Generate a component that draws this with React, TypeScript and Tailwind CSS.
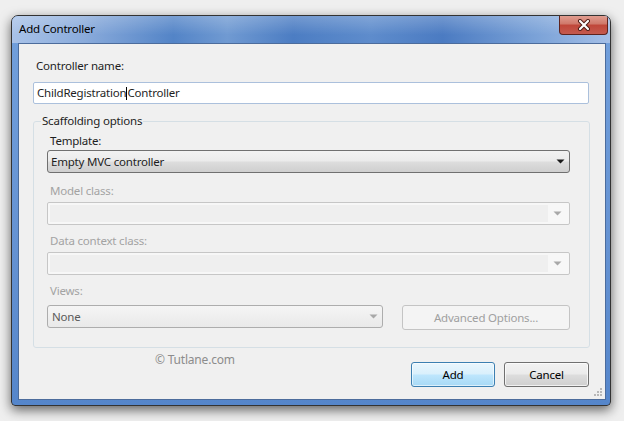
import React from "react";

function Arrow({ color }: { color: string }) {
  return (
    <svg width="9" height="5" viewBox="0 0 9 5">
      <path d="M0.5 0.5 L8.5 0.5 L4.5 4.5 Z" fill={color} />
    </svg>
  );
}

function DisabledCombo() {
  return (
    <div className="w-[523px] h-[23px] border border-[#c6c6c6] rounded-[2px] bg-[#f7f7f7] flex p-[2px]">
      <div className="flex-1 bg-[#efefef]" />
      <div className="w-[19px] flex items-center justify-center">
        <Arrow color="#a8a8a8" />
      </div>
    </div>
  );
}

export default function App() {
  return (
    <div className="w-[624px] h-[421px] bg-[#efefef] pt-[15px] pl-[11px] font-['Noto_Sans',sans-serif] text-[11.5px] tracking-[-0.2px] text-[#1e1e1e]">
      <div className="relative w-[600px] h-[391px] flex flex-col rounded-t-[7px] rounded-b-[4px] border border-[#333333] bg-[linear-gradient(180deg,#72a0dc_0%,#6592d2_60%,#5586cb_100%)] shadow-[0_4px_12px_rgba(0,0,0,0.6)] overflow-hidden">
        <div className="h-[27px] flex items-center pl-[7px] pb-[1px] leading-[16px] bg-[linear-gradient(180deg,rgba(255,255,255,0.22),rgba(255,255,255,0)_70%),linear-gradient(90deg,#a8c2e8_0%,#8aabdb_12%,#5384c7_27%,#709ad2_36%,#4c7dc3_47%,#5e8ccc_60%,#4b7bc2_72%,#7ca3d8_88%,#a4bfe7_100%)]">
          <span className="text-black">Add Controller</span>
        </div>
        <div className="absolute top-[-1px] right-[2px] w-[49px] h-[20px] rounded-b-[4px] border border-[#5e231d] border-t-0 bg-[linear-gradient(180deg,#e3a194_0%,#d07a6c_45%,#c0473a_55%,#c45a4e_100%)] flex items-center justify-center">
          <svg width="14" height="12" viewBox="0 0 14 12">
            <path d="M3 2 L11 10 M11 2 L3 10" stroke="#4a1a14" strokeWidth="4" strokeLinecap="round" />
            <path d="M3 2 L11 10 M11 2 L3 10" stroke="#ffffff" strokeWidth="2.2" strokeLinecap="round" />
          </svg>
        </div>

        <div className="relative flex-1 ml-[6px] mr-[4px] mb-[5px] border border-[#4c6c9c] bg-[#f0f0f0] flex flex-col items-start pl-[14px] pr-[16px]">
          <div className="mt-[14px] ml-[3px] h-[16px] leading-[16px]">Controller name:</div>
          <div className="mt-[8px] w-[556px] h-[22px] border border-[#abc0dc] rounded-[2px] bg-white flex items-center pl-[3px] leading-[16px]">
            <span>ChildRegistration</span>
            <span className="inline-block w-[1px] h-[13px] bg-black" />
            <span>Controller</span>
          </div>

          <fieldset className="mt-[9px] w-[557px] border border-[#d5dfe5] rounded-[3px] pb-[17px]">
            <legend className="ml-[7px] px-[1px] h-[16px] leading-[16px]">Scaffolding options</legend>
            <div className="pl-[13px] flex flex-col items-start">
              <div className="mt-[4px] ml-[3px] h-[16px] leading-[16px]">Template:</div>
              <div className="mt-[1px] w-[523px] h-[23px] border border-[#707070] rounded-[3px] bg-[linear-gradient(180deg,#f2f2f2_0%,#ebebeb_48%,#dddddd_52%,#cfcfcf_100%)] flex items-center pl-[3px] pr-[4px]">
                <span className="flex-1 leading-[16px]">Empty MVC controller</span>
                <Arrow color="#1a1a1a" />
              </div>

              <div className="mt-[10px] ml-[3px] h-[16px] leading-[16px] text-[#a3a3a3]">Model class:</div>
              <div className="mt-[3px]">
                <DisabledCombo />
              </div>

              <div className="mt-[8px] ml-[3px] h-[16px] leading-[16px] text-[#a3a3a3]">Data context class:</div>
              <div className="mt-[3px]">
                <DisabledCombo />
              </div>

              <div className="mt-[8px] ml-[3px] h-[16px] leading-[16px] text-[#a3a3a3]">Views:</div>
              <div className="mt-[6px] flex items-start gap-[19px]">
                <div className="w-[336px] h-[23px] border border-[#adadad] rounded-[3px] bg-[linear-gradient(180deg,#f5f5f5_0%,#efefef_50%,#e9e9e9_100%)] flex items-center pl-[4px] pr-[4px]">
                  <span className="flex-1 leading-[16px] text-[#5a5a5a]">None</span>
                  <Arrow color="#a8a8a8" />
                </div>
                <div className="w-[168px] h-[25px] border border-[#c4c4c4] rounded-[3px] bg-[#f4f4f4] flex items-center justify-center text-[#a0a0a0] leading-[16px]">
                  Advanced Options...
                </div>
              </div>
            </div>
          </fieldset>

          <div className="w-full flex items-start">
            <div className="mt-[3px] ml-[122px] text-[12px] leading-[18px] text-[#8c8c8c]">© Tutlane.com</div>
            <div className="ml-auto mt-[14px] flex gap-[9px]">
              <div className="w-[84px] h-[25px] border border-[#3c7fb1] rounded-[3px] bg-[linear-gradient(180deg,#eaf6fd_0%,#d9f0fc_48%,#bee6fd_52%,#a7d9f5_100%)] shadow-[inset_0_0_0_1px_rgba(255,255,255,0.6)] flex items-center justify-center leading-[16px] text-black">
                Add
              </div>
              <div className="w-[85px] h-[25px] border border-[#707070] rounded-[3px] bg-[linear-gradient(180deg,#f2f2f2_0%,#ebebeb_48%,#dddddd_52%,#cfcfcf_100%)] shadow-[inset_0_0_0_1px_rgba(255,255,255,0.7)] flex items-center justify-center leading-[16px] text-black">
                Cancel
              </div>
            </div>
          </div>

          <svg className="absolute right-[2px] bottom-[2px]" width="10" height="10" viewBox="0 0 10 10">
            <rect x="7" y="1" width="2" height="2" fill="#b8b8b8" />
            <rect x="4" y="4" width="2" height="2" fill="#b8b8b8" />
            <rect x="7" y="4" width="2" height="2" fill="#b8b8b8" />
            <rect x="1" y="7" width="2" height="2" fill="#b8b8b8" />
            <rect x="4" y="7" width="2" height="2" fill="#b8b8b8" />
            <rect x="7" y="7" width="2" height="2" fill="#b8b8b8" />
          </svg>
        </div>
      </div>
    </div>
  );
}
